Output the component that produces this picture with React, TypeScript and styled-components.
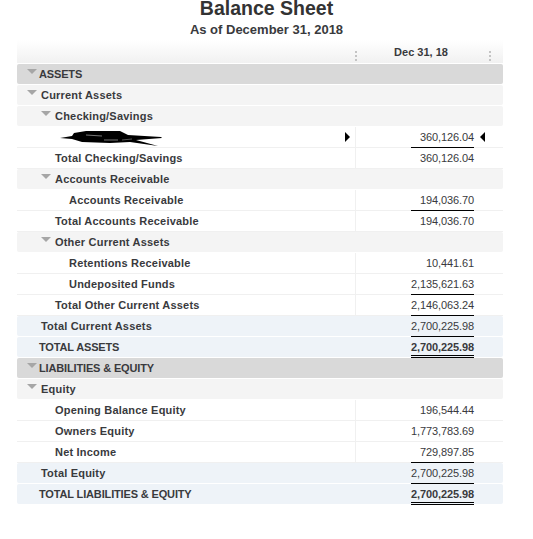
import React from "react";
import styled, { createGlobalStyle } from "styled-components";

const GlobalStyle = createGlobalStyle`
  html, body {
    margin: 0;
    padding: 0;
    background: #ffffff;
    font-family: "Liberation Sans", Arial, sans-serif;
  }
`;

const Page = styled.div`
  width: 533px;
  height: 539px;
  overflow: hidden;
`;

const Heading = styled.header`
  display: flex;
  flex-direction: column;
  align-items: center;
  height: 40px;
`;

const Title = styled.h1`
  margin: 0;
  font-size: 19.5px;
  line-height: 16px;
  font-weight: 700;
  color: #333333;
`;

const Subtitle = styled.h2`
  margin: 6px 0 0;
  font-size: 13px;
  line-height: 16px;
  font-weight: 700;
  color: #393a3d;
`;

const Report = styled.div`
  display: flex;
  flex-direction: column;
  gap: 1px;
  width: 486px;
  margin-left: 17px;
  font-size: 11px;
  letter-spacing: 0.2px;
  color: #393a3d;
`;

const HeaderRow = styled.div`
  display: grid;
  grid-template-columns: 340px 1fr 16px;
  align-items: center;
  height: 23px;
  background: linear-gradient(#ffffff, #f1f1f1);
`;

const ColumnTitle = styled.div`
  margin-left: -2px;
  text-align: center;
  font-weight: 700;
  letter-spacing: 0;
`;

const Grip = styled.span<{ $side: "left" | "right" }>`
  justify-self: ${(p) => (p.$side === "left" ? "end" : "start")};
  width: 2px;
  height: 10px;
  margin-top: 8px;
  margin-left: ${(p) => (p.$side === "left" ? "0" : "2px")};
  background: repeating-linear-gradient(#c4c4c4 0 2px, transparent 2px 4px);
`;

const backgrounds = {
  section: "#d9d9d9",
  group: "#f4f4f4",
  line: "#ffffff",
  total: "#eef3f8",
};

const Row = styled.div<{ $kind: keyof typeof backgrounds }>`
  position: relative;
  display: grid;
  grid-template-columns: 338px 1fr;
  grid-template-rows: 20px;
  height: 20px;
  background: ${(p) => backgrounds[p.$kind]};
  border-radius: ${(p) => (p.$kind === "line" ? "0" : "2px")};
  box-shadow: ${(p) => (p.$kind === "line" ? "0 1px 0 #f0f0f0" : "none")};
`;

const Label = styled.div<{ $indent: number; $caps: boolean }>`
  display: flex;
  align-items: center;
  padding-left: ${(p) => p.$indent}px;
  font-weight: 700;
  letter-spacing: ${(p) => (p.$caps ? "-0.15px" : "0.2px")};
  white-space: nowrap;
`;

const Caret = styled.span<{ $gap: number }>`
  width: 0;
  height: 0;
  margin: -5px ${(p) => p.$gap}px 0 0;
  border-left: 5px solid transparent;
  border-right: 5px solid transparent;
  border-top: 5px solid #a6a6a6;
`;

const AmountCell = styled.div<{ $divider: boolean }>`
  display: flex;
  justify-content: flex-end;
  padding-right: 29px;
  border-left: 1px solid ${(p) => (p.$divider ? "#f0f0f0" : "transparent")};
`;

// the rules sit in the 1px gap between rows, so the box runs past its row
const Amount = styled.div<{ $rule?: boolean; $double?: boolean; $bold?: boolean }>`
  position: relative;
  z-index: 1;
  flex: none;
  box-sizing: border-box;
  width: 63px;
  height: 21px;
  line-height: 20px;
  text-align: right;
  white-space: nowrap;
  font-weight: ${(p) => (p.$bold ? 700 : 400)};
  letter-spacing: -0.1px;
  border-bottom: ${(p) => (p.$rule ? "1px solid #000000" : "none")};
  &::after {
    content: ${(p) => (p.$double ? '""' : "none")};
    position: absolute;
    left: 0;
    right: 0;
    bottom: 0;
    box-sizing: border-box;
    height: 3px;
    border-top: 1px solid #000000;
    border-bottom: 1px solid #000000;
  }
`;

const Marker = styled.span<{ $side: "left" | "right" }>`
  position: absolute;
  top: 5px;
  ${(p) => (p.$side === "left" ? "left: 328px;" : "left: 463px;")}
  width: 0;
  height: 0;
  border-top: 5px solid transparent;
  border-bottom: 5px solid transparent;
  ${(p) =>
    p.$side === "left"
      ? "border-left: 5px solid #000000;"
      : "border-right: 5px solid #000000;"}
`;

const Scribble = styled.svg`
  display: block;
  flex: none;
  width: 104px;
  height: 17px;
  margin-top: 3px;
`;

type RowData = {
  kind: keyof typeof backgrounds;
  label?: string;
  indent: number;
  caretGap?: number;
  amount?: string;
  rule?: boolean;
  double?: boolean;
  bold?: boolean;
  redacted?: boolean;
};

const rows: RowData[] = [
  { kind: "section", label: "ASSETS", indent: 10, caretGap: 2 },
  { kind: "group", label: "Current Assets", indent: 10, caretGap: 4 },
  { kind: "group", label: "Checking/Savings", indent: 24, caretGap: 4 },
  { kind: "line", redacted: true, indent: 43, amount: "360,126.04", rule: true },
  { kind: "line", label: "Total Checking/Savings", indent: 38, amount: "360,126.04" },
  { kind: "group", label: "Accounts Receivable", indent: 24, caretGap: 4 },
  { kind: "line", label: "Accounts Receivable", indent: 52, amount: "194,036.70", rule: true },
  { kind: "line", label: "Total Accounts Receivable", indent: 38, amount: "194,036.70" },
  { kind: "group", label: "Other Current Assets", indent: 24, caretGap: 4 },
  { kind: "line", label: "Retentions Receivable", indent: 52, amount: "10,441.61" },
  { kind: "line", label: "Undeposited Funds", indent: 52, amount: "2,135,621.63", rule: true },
  { kind: "line", label: "Total Other Current Assets", indent: 38, amount: "2,146,063.24", rule: true },
  { kind: "total", label: "Total Current Assets", indent: 24, amount: "2,700,225.98", rule: true },
  { kind: "total", label: "TOTAL ASSETS", indent: 22, amount: "2,700,225.98", double: true, bold: true },
  { kind: "section", label: "LIABILITIES & EQUITY", indent: 10, caretGap: 2 },
  { kind: "group", label: "Equity", indent: 10, caretGap: 4 },
  { kind: "line", label: "Opening Balance Equity", indent: 38, amount: "196,544.44" },
  { kind: "line", label: "Owners Equity", indent: 38, amount: "1,773,783.69" },
  { kind: "line", label: "Net Income", indent: 38, amount: "729,897.85", rule: true },
  { kind: "total", label: "Total Equity", indent: 24, amount: "2,700,225.98", rule: true },
  { kind: "total", label: "TOTAL LIABILITIES & EQUITY", indent: 22, amount: "2,700,225.98", double: true, bold: true },
];

const App = () => {
  return (
    <Page>
      <GlobalStyle />
      <Heading>
        <Title>Balance Sheet</Title>
        <Subtitle>As of December 31, 2018</Subtitle>
      </Heading>
      <Report>
        <HeaderRow>
          <Grip $side="left" />
          <ColumnTitle>Dec 31, 18</ColumnTitle>
          <Grip $side="right" />
        </HeaderRow>
        {rows.map((row, i) => (
          <Row key={i} $kind={row.kind}>
            <Label $indent={row.indent} $caps={row.label === row.label?.toUpperCase()}>
              {row.caretGap !== undefined && <Caret $gap={row.caretGap} />}
              {row.redacted ? (
                <Scribble viewBox="0 0 104 17">
                  <path d="M0 8 L12 6 L14 3 L26 1 L60 1 L68 5 L101 7 L102 8 L76 10 L98 16 L70 12 L50 13 L22 12 L12 9 Z" fill="#000000" />
                  <path d="M26 5 L42 6 M44 10 L58 10" stroke="#777777" strokeWidth="1" />
                  <path d="M62 10 L72 9" stroke="#555555" strokeWidth="1" />
                </Scribble>
              ) : (
                row.label
              )}
            </Label>
            {row.kind !== "section" && row.kind !== "group" ? (
              <AmountCell $divider={row.kind === "line"}>
                <Amount $rule={row.rule} $double={row.double} $bold={row.bold}>
                  {row.amount}
                </Amount>
              </AmountCell>
            ) : null}
            {row.redacted && (
              <>
                <Marker $side="left" />
                <Marker $side="right" />
              </>
            )}
          </Row>
        ))}
      </Report>
    </Page>
  );
};

export default App;
